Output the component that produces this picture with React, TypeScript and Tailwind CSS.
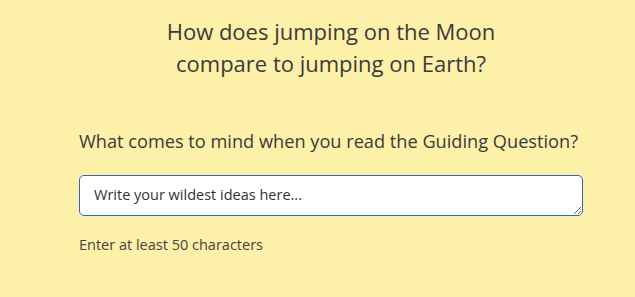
import React from 'react';

export default function App() {
    return (
        <div className="min-h-[297px] w-full bg-[#fdf0a9] text-[#3b3b3b]" style={{ fontFamily: '"Open Sans", "Liberation Sans", sans-serif' }}>
            <div className="ml-[79px] w-[504px] pt-[15px]">
                <h1 className="text-center text-[22px] leading-[32px] font-normal">
                    How does jumping on the Moon
                    <br />
                    compare to jumping on Earth?
                </h1>
                <p className="mt-[50px] text-[18.2px] leading-[24px]">
                    What comes to mind when you read the Guiding Question?
                </p>
                <textarea
                    className="mt-[22px] block h-[41px] w-[504px] resize-y rounded-[5px] border border-[#2d6bb1] bg-white px-[14px] py-[9px] text-[14.5px] leading-[20px] text-[#333] placeholder:text-[#333] outline-none"
                    placeholder="Write your wildest ideas here..."
                />
                <p className="mt-[19px] text-[14.5px] leading-[20px] text-[#444]">Enter at least 50 characters</p>
            </div>
        </div>
    );
}
